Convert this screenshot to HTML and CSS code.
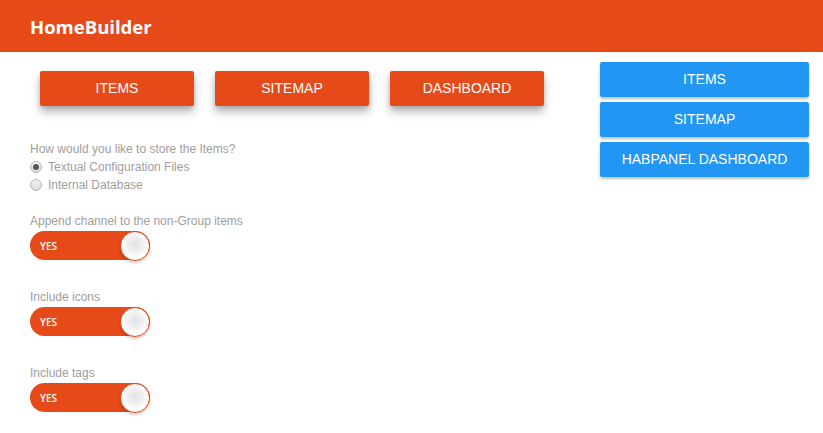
FILE: index.html
```html
<!DOCTYPE html>
<html lang="en">
<head>
    <meta charset="UTF-8">
    <title>HomeBuilder</title>
    <link rel="stylesheet" href="styles.css">
</head>
<body>
<header class="topbar">
    <h1 class="brand">HomeBuilder</h1>
</header>
<div class="page">
    <div class="builder">
        <div class="tabs">
            <a href="javascript:;" class="tab">Items</a>
            <a href="javascript:;" class="tab">Sitemap</a>
            <a href="javascript:;" class="tab">Dashboard</a>
        </div>

        <div class="field field-radios">
            <div class="label">How would you like to store the Items?</div>
            <label class="radio-row"><span class="radio on"></span>Textual Configuration Files</label>
            <label class="radio-row"><span class="radio"></span>Internal Database</label>
        </div>

        <div class="field">
            <div class="label">Append channel to the non-Group items</div>
            <div class="switch"><span class="switch-text">YES</span><span class="knob"></span></div>
        </div>

        <div class="field">
            <div class="label">Include icons</div>
            <div class="switch"><span class="switch-text">YES</span><span class="knob"></span></div>
        </div>

        <div class="field">
            <div class="label">Include tags</div>
            <div class="switch"><span class="switch-text">YES</span><span class="knob"></span></div>
        </div>
    </div>

    <div class="exports">
        <a href="javascript:;" class="export">Items</a>
        <a href="javascript:;" class="export">Sitemap</a>
        <a href="javascript:;" class="export">Habpanel Dashboard</a>
    </div>
</div>
</body>
</html>
```

FILE: styles.css
```css
* {
    box-sizing: border-box;
}

body {
    margin: 0;
    background: #fff;
    font-family: "Liberation Sans", Arial, sans-serif;
}

.topbar {
    height: 52px;
    background-color: #e64a19;
    display: flex;
    align-items: center;
    padding-left: 30px;
}

.brand {
    margin: 0;
    color: #fff;
    font-family: "Open Sans", sans-serif;
    font-size: 18.5px;
    font-weight: 700;
}

.page {
    display: flex;
    justify-content: space-between;
}

.builder {
    padding-left: 30px;
    padding-top: 19px;
}

.tabs {
    display: flex;
    gap: 21px;
    margin-left: 10px;
    margin-bottom: 34px;
}

.tab {
    width: 154px;
    height: 35px;
    line-height: 35px;
    text-align: center;
    background-color: #e64a19;
    color: #fff;
    text-decoration: none;
    text-transform: uppercase;
    font-size: 14px;
    border-radius: 2px;
    box-shadow: 0 6px 10px rgba(0, 0, 0, 0.28), 0 2px 4px rgba(0, 0, 0, 0.12);
}

.field {
    margin-bottom: 28px;
}

.field-radios {
    margin-bottom: 18px;
}

.label,
.radio-row {
    font-size: 12px;
    line-height: 18px;
    color: #9e9e9e;
}

.radio-row {
    display: flex;
    align-items: center;
}

.radio {
    width: 12px;
    height: 12px;
    border-radius: 50%;
    border: 1px solid #b8b8b8;
    background: linear-gradient(#f4f4f4, #dcdcdc);
    margin-right: 6px;
    position: relative;
}

.radio.on::after {
    content: "";
    position: absolute;
    left: 2px;
    top: 2px;
    width: 6px;
    height: 6px;
    border-radius: 50%;
    background: #555;
}

.switch {
    width: 120px;
    height: 29px;
    margin-top: 1px;
    border-radius: 15px;
    background-color: #e64a19;
    display: flex;
    align-items: center;
    justify-content: space-between;
    padding-left: 10px;
}

.switch-text {
    color: #fff;
    font-family: "Open Sans", sans-serif;
    font-size: 10px;
    font-weight: 600;
}

.knob {
    width: 30px;
    height: 30px;
    border-radius: 50%;
    border: 1px solid #e64a19;
    background: radial-gradient(circle at 50% 45%, #e2e2e2 0, #efefef 35%, #fff 62%);
    box-shadow: 0 2px 3px rgba(0, 0, 0, 0.2);
}

.exports {
    width: 209px;
    margin-top: 10px;
    margin-right: 14px;
    display: flex;
    flex-direction: column;
    gap: 5px;
}

.export {
    height: 35px;
    line-height: 35px;
    text-align: center;
    background-color: #2196f3;
    color: #fff;
    text-decoration: none;
    text-transform: uppercase;
    font-size: 14px;
    border-radius: 2px;
    box-shadow: 0 2px 3px rgba(0, 0, 0, 0.25);
}
```
